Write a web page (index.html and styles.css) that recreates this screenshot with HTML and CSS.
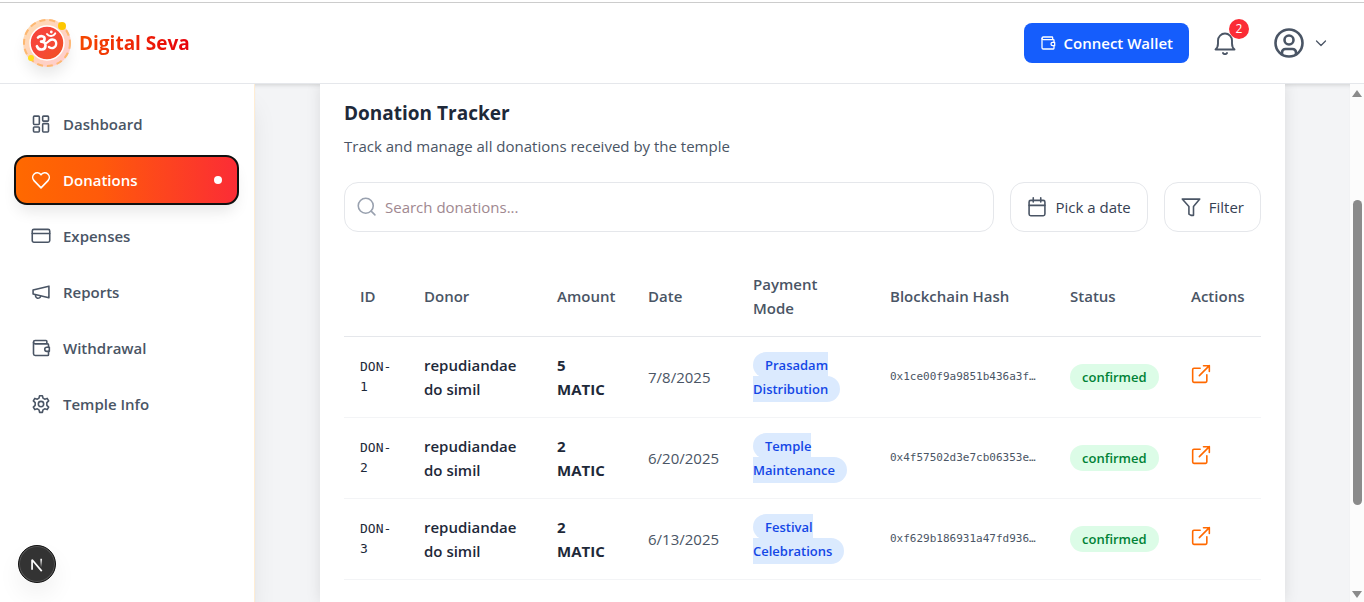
FILE: index.html
```html
<!DOCTYPE html>
<html lang="en">
<head>
<meta charset="utf-8">
<meta name="viewport" content="width=device-width, initial-scale=1">
<title>Digital Seva – Donations</title>
<link rel="stylesheet" href="styles.css">
</head>
<body>
<svg class="sprite" aria-hidden="true">
  <symbol id="i-dash" viewBox="0 0 24 24"><rect x="3" y="2.5" width="7" height="10" rx="1"/><rect x="14" y="2.500" width="7" height="6" rx="1"/><rect x="14" y="11.500" width="7" height="10" rx="1"/><rect x="3" y="15.500" width="7" height="6" rx="1"/></symbol>
  <symbol id="i-heart" viewBox="0 0 24 24"><path d="M12 21.500 3.600 12.700a5.600 5.600 0 0 1 .2-7.900C6.200 2.600 9.900 2.900 12 5.700c2.100-2.800 5.800-3.100 8.200-.9a5.600 5.600 0 0 1 .2 7.900Z"/></symbol>
  <symbol id="i-card" viewBox="0 0 24 24"><rect x="1.500" y="4" width="21" height="15.500" rx="2"/><path d="M1.500 9h21"/></symbol>
  <symbol id="i-horn" viewBox="0 0 24 24"><path d="M21.500 5v14L2.500 14.500v-5Z"/><path d="M11.500 17.200a3.100 3.100 0 1 1-6-1.600"/></symbol>
  <symbol id="i-wallet" viewBox="0 0 24 24"><path d="M19 7V4a1 1 0 0 0-1-1H5a2 2 0 0 0 0 4h15a1 1 0 0 1 1 1v3"/><path d="M3 5v14a2 2 0 0 0 2 2h15a1 1 0 0 0 1-1v-4"/><path d="M22 11h-3a2.500 2.500 0 0 0 0 5h3Z"/></symbol>
  <symbol id="i-gear" viewBox="0 0 24 24"><path d="M10.300 2h3.400l.7 3 2 1.200 3-.9 1.800 3-2.200 2.100v3.200l2.200 2.100-1.800 3-3-.9-2 1.200-.7 3h-3.400l-.7-3-2-1.200-3 .9-1.800-3L5 13.600v-3.200L2.800 8.300l1.800-3 3 .9 2-1.200Z"/><circle cx="12" cy="12" r="3.200"/></symbol>
  <symbol id="i-bell" viewBox="0 0 24 24"><path d="M2.500 18.500h19c-1.800-1.500-2.500-3-2.500-6V9.500a7 7 0 0 0-14 0v3c0 3-.7 4.500-2.500 6Z"/><path d="M10 22a2.300 2.300 0 0 0 4 0"/></symbol>
  <symbol id="i-user" viewBox="0 0 30 30"><circle cx="15" cy="15" r="13.500"/><circle cx="15" cy="12" r="4.500"/><path d="M8 26v-1.500a3.500 3.500 0 0 1 3.500-3.500h7a3.500 3.500 0 0 1 3.500 3.500V26"/></symbol>
  <symbol id="i-down" viewBox="0 0 24 24"><path d="m3 8 9 9 9-9"/></symbol>
  <symbol id="i-search" viewBox="0 0 24 24"><circle cx="10.500" cy="10.500" r="9"/><path d="m17 17 4.500 4.500"/></symbol>
  <symbol id="i-cal" viewBox="0 0 24 24"><rect x="2.500" y="4" width="19" height="18.500" rx="2"/><path d="M2.500 10h19M7.500 1v5M16.500 1v5"/></symbol>
  <symbol id="i-filter" viewBox="0 0 24 24"><path d="M1.500 2.500h21L15 11.500V22h-3l-2.500-1.500v-9Z"/></symbol>
  <symbol id="i-ext" viewBox="0 0 24 24"><path d="M15 2h7v7M22 2 10 14M19 13v7.500a1.500 1.500 0 0 1-1.500 1.500h-14A1.500 1.500 0 0 1 2 20.500v-14A1.500 1.500 0 0 1 3.500 5H11"/></symbol>
</svg>

<header class="topbar">
  <a class="brand" href="#">
    <span class="logo">
      <svg viewBox="0 0 48 48" aria-hidden="true">
        <defs>
          <linearGradient id="halo" x1="0" y1="0" x2="1" y2="1"><stop offset="0" stop-color="#ffdcae"/><stop offset="1" stop-color="#ffcbd0"/></linearGradient>
          <linearGradient id="disc" x1="0" y1="0" x2="1" y2="1"><stop offset="0" stop-color="#f7443a"/><stop offset=".5" stop-color="#f6483a"/><stop offset="1" stop-color="#f0521c"/></linearGradient>
        </defs>
        <circle cx="24" cy="24" r="24" fill="url(#halo)"/>
        <circle cx="24" cy="24" r="23" fill="none" stroke="#fdb872" stroke-width="2" stroke-dasharray="6 4"/>
        <circle cx="24" cy="24" r="17" fill="url(#disc)" stroke="#fff" stroke-width="1.500"/>
        <circle cx="39" cy="7" r="4" fill="#fdc700"/>
        <circle cx="8" cy="39" r="3" fill="#ffdf20"/>
        <g fill="none" stroke="#fff" stroke-width="2.600" stroke-linecap="round" stroke-linejoin="round">
          <path d="M15 18.500c2-2.200 6.800-1.700 6.600 1.300-.1 1.900-1.700 2.800-3.600 2.800 2.600-.1 4.600 1.400 4.500 4-.1 5-7 5.200-8.600.6"/>
          <path d="M22 24c2 .4 3-1.300 4.600-2.500 3-2.200 6.700-.5 6.600 3.300-.1 3.600-3.800 5.600-7.300 3.200" stroke-width="2.300"/>
          <path d="M24 15c2 2.800 6.500 2.500 8.200-.6" stroke-width="2"/>
        </g>
        <circle cx="28.300" cy="13" r="1.400" fill="#fff"/>
      </svg>
    </span>
    <span class="brand-name">Digital Seva</span>
  </a>
  <div class="top-actions">
    <button class="connect" type="button"><svg class="icon icon-16"><use href="#i-wallet"/></svg>Connect Wallet</button>
    <button class="bell" type="button" aria-label="Notifications"><svg class="icon icon-24"><use href="#i-bell"/></svg><span class="count">2</span></button>
    <button class="account" type="button" aria-label="Account"><svg class="icon icon-30"><use href="#i-user"/></svg><svg class="icon icon-12"><use href="#i-down"/></svg></button>
  </div>
</header>

<div class="shell">
  <nav class="sidebar" aria-label="Main">
    <a class="nav-item" href="#"><svg class="icon icon-20"><use href="#i-dash"/></svg>Dashboard</a>
    <a class="nav-item active" href="#" aria-current="page"><svg class="icon icon-20"><use href="#i-heart"/></svg>Donations<span class="dot"></span></a>
    <a class="nav-item" href="#"><svg class="icon icon-20"><use href="#i-card"/></svg>Expenses</a>
    <a class="nav-item" href="#"><svg class="icon icon-20"><use href="#i-horn"/></svg>Reports</a>
    <a class="nav-item" href="#"><svg class="icon icon-20"><use href="#i-wallet"/></svg>Withdrawal</a>
    <a class="nav-item" href="#"><svg class="icon icon-20"><use href="#i-gear"/></svg>Temple Info</a>
  </nav>

  <main class="content">
    <section class="card">
      <h1>Donation Tracker</h1>
      <p class="lead">Track and manage all donations received by the temple</p>
      <div class="tools">
        <label class="search"><svg class="icon icon-20"><use href="#i-search"/></svg><input type="text" placeholder="Search donations..." aria-label="Search donations"></label>
        <button class="tool" type="button"><svg class="icon icon-20"><use href="#i-cal"/></svg>Pick a date</button>
        <button class="tool" type="button"><svg class="icon icon-20"><use href="#i-filter"/></svg>Filter</button>
      </div>
      <table>
        <colgroup><col class="c-id"><col class="c-donor"><col class="c-amount"><col class="c-date"><col class="c-mode"><col class="c-hash"><col class="c-status"><col class="c-actions"></colgroup>
        <thead>
          <tr><th>ID</th><th>Donor</th><th>Amount</th><th>Date</th><th>Payment Mode</th><th>Blockchain Hash</th><th>Status</th><th>Actions</th></tr>
        </thead>
        <tbody>
          <tr><td class="id">DON-1</td><td class="donor">repudiandae do simil</td><td class="amount">5 MATIC</td><td class="date">7/8/2025</td><td class="tag"><span class="mode">Prasadam Distribution</span></td><td class="hash">0x1ce00f9a9851b436a3f…</td><td class="tag"><span class="status">confirmed</span></td><td><a class="open" href="#" aria-label="Open DON-1"><svg class="icon icon-20"><use href="#i-ext"/></svg></a></td></tr>
          <tr><td class="id">DON-2</td><td class="donor">repudiandae do simil</td><td class="amount">2 MATIC</td><td class="date">6/20/2025</td><td class="tag"><span class="mode">Temple Maintenance</span></td><td class="hash">0x4f57502d3e7cb06353e…</td><td class="tag"><span class="status">confirmed</span></td><td><a class="open" href="#" aria-label="Open DON-2"><svg class="icon icon-20"><use href="#i-ext"/></svg></a></td></tr>
          <tr><td class="id">DON-3</td><td class="donor">repudiandae do simil</td><td class="amount">2 MATIC</td><td class="date">6/13/2025</td><td class="tag"><span class="mode">Festival Celebrations</span></td><td class="hash">0xf629b186931a47fd936…</td><td class="tag"><span class="status">confirmed</span></td><td><a class="open" href="#" aria-label="Open DON-3"><svg class="icon icon-20"><use href="#i-ext"/></svg></a></td></tr>
        </tbody>
      </table>
    </section>
  </main>

  <div class="scrollbar" aria-hidden="true">
    <span class="arrow up"></span>
    <span class="track"><span class="thumb"></span></span>
    <span class="arrow down"></span>
  </div>
</div>

<button class="dev-badge" type="button" aria-label="Open developer tools">
  <svg viewBox="0 0 38 38" aria-hidden="true">
    <defs><linearGradient id="fade" x1="0" y1="0" x2="0" y2="1"><stop offset="0" stop-color="#fff"/><stop offset="1" stop-color="#fff" stop-opacity="0"/></linearGradient></defs>
    <path d="M13.800 25V14.500L24 26.500" fill="none" stroke="#fff" stroke-width="1.800" stroke-linejoin="bevel"/>
    <rect x="22.500" y="13.500" width="1.800" height="9" fill="url(#fade)"/>
  </svg>
</button>
</body>
</html>
```
FILE: styles.css
```css
* { box-sizing: border-box; }

body {
  margin: 0;
  height: 100vh;
  display: flex;
  flex-direction: column;
  overflow: hidden;
  border-top: 1px solid #fff;
  background: #fff;
  color: #1e2939;
  font-family: "Open Sans", "Noto Sans", sans-serif;
  font-size: 15px;
  line-height: 24px;
}

a { color: inherit; text-decoration: none; }
button, input { font: inherit; color: inherit; }
button { cursor: pointer; border: 0; background: none; padding: 0; }

.sprite { position: absolute; width: 0; height: 0; }

.icon {
  flex: none;
  fill: none;
  stroke: currentColor;
  stroke-width: 1.9;
  stroke-linecap: round;
  stroke-linejoin: round;
}
.icon-12 { width: 12px; height: 12px; stroke-width: 2.5; }
.icon-16 { width: 16px; height: 16px; }
.icon-20 { width: 20px; height: 20px; }
.icon-24 { width: 24px; height: 24px; }
.icon-30 { width: 30px; height: 30px; stroke-width: 2.6; }

/* Top bar */
.topbar {
  flex: none;
  display: flex;
  align-items: center;
  justify-content: space-between;
  margin-top: 1px;
  padding: 16px 37px 16px 23px;
  border-top: 1px solid #ccc;
  border-bottom: 1px solid #e5e7eb;
  background: #fff;
}
.brand { display: flex; align-items: center; gap: 8px; }
.logo {
  width: 48px;
  height: 48px;
  border-radius: 50%;
  box-shadow: 0 10px 15px -3px rgba(0, 0, 0, .1);
}
.logo svg { display: block; width: 48px; height: 48px; }
.brand-name {
  font-size: 19px;
  font-weight: 700;
  line-height: 28px;
  color: transparent;
  background: linear-gradient(90deg, #f54900, #e7000b);
  background-clip: text;
  -webkit-background-clip: text;
}
.top-actions { display: flex; align-items: center; }
.connect {
  display: flex;
  align-items: center;
  gap: 8px;
  padding: 8px 16px;
  border-radius: 8px;
  background: #155dfc;
  color: #fff;
  font-weight: 600;
}
.bell { position: relative; margin-left: 24px; color: #4a5565; }
.bell svg, .account svg { display: block; }
.count {
  position: absolute;
  top: -12px;
  right: -12px;
  width: 20px;
  height: 20px;
  border-radius: 50%;
  background: #fb2c36;
  color: #fff;
  font-size: 12px;
  line-height: 20px;
  text-align: center;
}
.account {
  display: flex;
  align-items: center;
  gap: 11px;
  margin-left: 37px;
  color: #4a5565;
}

/* Page shell */
.shell { flex: 1; display: flex; min-height: 0; background: #f3f4f6; }

.sidebar {
  flex: none;
  width: 255px;
  display: flex;
  flex-direction: column;
  gap: 8px;
  padding: 16px 16px 16px 15px;
  border-right: 1px solid #ffedd4;
  background: #fff;
  box-shadow: 0 20px 25px -5px rgba(0, 0, 0, .1);
  z-index: 1;
}
.nav-item {
  display: flex;
  align-items: center;
  gap: 12px;
  padding: 12px 16px;
  border-radius: 12px;
  color: #4a5565;
  font-weight: 600;
}
.nav-item.active {
  background: linear-gradient(90deg, #ff6900, #ff5a0a 38%, #fb2c36);
  color: #fff;
  outline: 2px solid #101010;
  outline-offset: -1px;
  box-shadow: 0 10px 15px -3px rgba(0, 0, 0, .1);
}
.dot {
  width: 8px;
  height: 8px;
  margin-left: auto;
  border-radius: 50%;
  background: #fff;
}

/* Content */
.content {
  flex: 1;
  min-width: 0;
  display: flex;
  flex-direction: column;
  padding: 0 65px;
  overflow: hidden;
  box-shadow: inset 0 4px 4px -3px rgba(0, 0, 0, .15);
}
.card {
  flex: 1 0 auto;
  padding: 15px 24px 0;
  background: #fff;
  box-shadow: 0 0 14px rgba(0, 0, 0, .1);
}
h1 { margin: 0; font-size: 19px; font-weight: 700; line-height: 28px; }
.lead { margin: 7px 0 24px; color: #4a5565; }

.tools { display: flex; gap: 16px; margin-bottom: 24px; }
.search, .tool {
  display: flex;
  align-items: center;
  gap: 8px;
  height: 50px;
  border: 1px solid #e5e7eb;
  border-radius: 14px;
  background: #fff;
}
.search { flex: 1; padding: 0 12px; color: #99a1af; }
.search input {
  flex: 1;
  min-width: 0;
  padding: 0;
  border: 0;
  outline: 0;
  background: none;
  color: #1e2939;
}
.search input::placeholder { color: #a08890; opacity: 1; }
.tool { padding: 0 16px; color: #364153; }
.tool .icon { color: #4a5565; }

table { width: 100%; table-layout: fixed; border-collapse: separate; border-spacing: 0; }
.c-id { width: 64px; }
.c-donor { width: 133px; }
.c-amount { width: 91px; }
.c-date { width: 105px; }
.c-mode { width: 137px; }
.c-hash { width: 180px; }
.c-status { width: 121px; }
.c-actions { width: 86px; }
th, td { padding: 16px 0 16px 16px; text-align: left; vertical-align: middle; }
th, .donor { padding-right: 16px; }
th { border-bottom: 1px solid #e5e7eb; color: #4a5565; font-weight: 600; }
th:nth-child(3), th:nth-child(8) { padding-right: 0; }
td { height: 81px; border-bottom: 1px solid #f3f4f6; }
.id, .hash { font-family: "DejaVu Sans Mono", "Liberation Mono", monospace; }
.id { font-size: 13px; line-height: 20px; }
.id { padding-right: 14px; }
.donor { font-weight: 600; }
.amount { padding-right: 16px; font-weight: 700; }
.date { color: #4a5565; }
.hash { color: #4a5565; font-size: 11px; line-height: 16px; }
.tag { font-size: 13px; font-weight: 600; }
.mode, .status { padding: 4px 12px; border-radius: 100px; }
.mode { background: #dbeafe; color: #1447e6; }
.status { background: #dcfce7; color: #008236; }
.open { color: #ff6900; }

/* Scrollbar */
.scrollbar {
  flex: none;
  width: 14px;
  display: flex;
  flex-direction: column;
  align-items: center;
  padding: 6px 0 4px;
  background: #fcfcfc;
}
.arrow { border: 5px solid transparent; }
.up { border-top: 0; border-bottom: 7px solid #8b8b8b; }
.down { border-bottom: 0; border-top: 7px solid #8b8b8b; }
.track {
  flex: 1;
  display: grid;
  grid-template-rows: 103fr 306fr 86fr;
}
.thumb { grid-row: 2; width: 9px; border-radius: 5px; background: #8b8b8b; }

.dev-badge {
  position: absolute;
  left: 18px;
  bottom: 19px;
  z-index: 2;
  width: 38px;
  height: 38px;
  border: 1px solid #111;
  border-radius: 50%;
  background: #333;
  box-shadow: inset 0 0 0 1px #555, 0 12px 24px rgba(0, 0, 0, .06);
}
.dev-badge svg { display: block; width: 36px; height: 36px; }
```
